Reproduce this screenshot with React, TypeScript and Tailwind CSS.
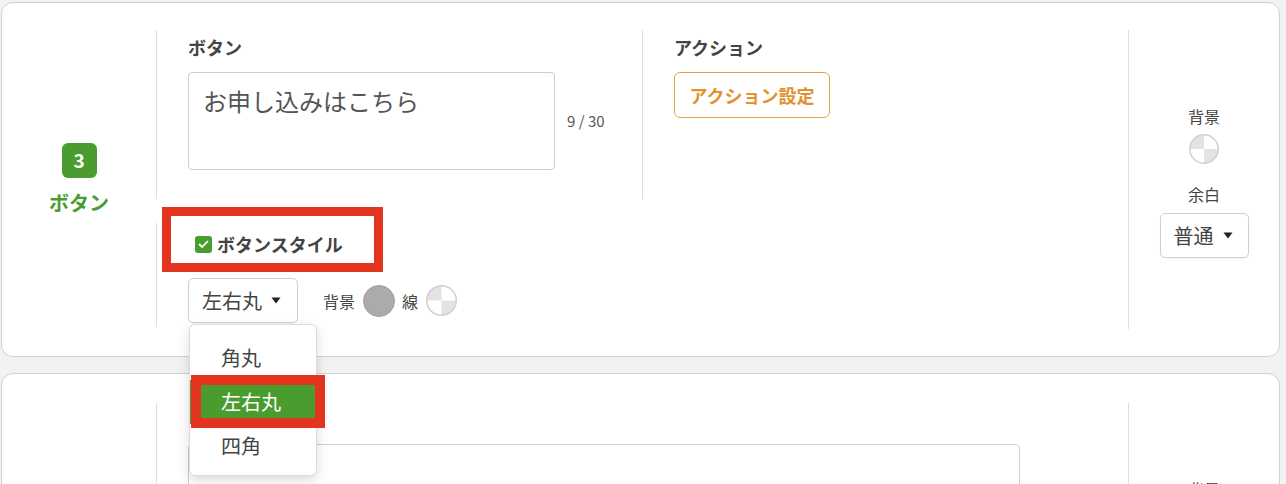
import React from "react";

const FONT = "font-['Noto_Sans_CJK_JP','Noto_Sans',sans-serif]";

function Caret() {
  return (
    <svg width="10" height="7" viewBox="0 0 10 7" className="ml-[9px]">
      <path d="M0.5 0.5 L9.5 0.5 L5 6.5 Z" fill="#222" />
    </svg>
  );
}

function CheckerSwatch({ size = 30 }: { size?: number }) {
  const r = size / 2 - 0.75;
  const c = size / 2;
  return (
    <svg width={size} height={size} viewBox={`0 0 ${size} ${size}`}>
      <defs>
        <clipPath id={`clip-${size}`}>
          <circle cx={c} cy={c} r={r} />
        </clipPath>
      </defs>
      <g clipPath={`url(#clip-${size})`}>
        <rect x="0" y="0" width={size} height={size} fill="#fff" />
        <rect x="0" y="0" width={c} height={c} fill="#e3e3e3" />
        <rect x={c} y={c} width={c} height={c} fill="#e3e3e3" />
      </g>
      <circle cx={c} cy={c} r={r} fill="none" stroke="#cfcfcf" strokeWidth="1.5" />
    </svg>
  );
}

function SelectBox({ label, width }: { label: string; width: string }) {
  return (
    <div
      className={`flex h-[45px] ${width} items-center rounded-[5px] border border-[#cfcfcf] bg-white pl-[13px] text-[20px] text-[#444] shadow-[0_1px_1px_rgba(0,0,0,0.04)]`}
    >
      <span className="leading-none">{label}</span>
      <Caret />
    </div>
  );
}

function RightColumn() {
  return (
    <div className="flex w-[151px] flex-col items-center border-l border-[#dedede] pt-[74px]">
      <span className="text-[16px] leading-[24px] text-[#444]">背景</span>
      <div className="mt-[6px]">
        <CheckerSwatch />
      </div>
      <span className="mt-[18px] text-[16px] leading-[24px] text-[#444]">余白</span>
      <div className="mt-[7px]">
        <SelectBox label="普通" width="w-[89px]" />
      </div>
    </div>
  );
}

export default function App() {
  return (
    <div className={`min-h-screen overflow-hidden bg-[#f2f2f2] pl-px pr-[6px] pt-[2px] ${FONT}`}>
      {/* card 3: button */}
      <div className="flex h-[355px] rounded-[12px] border border-[#d0d0d0] bg-white py-[27px]">
        <div className="flex w-[154px] flex-col items-center justify-center">
          <div className="flex h-[35px] w-[35px] items-center justify-center rounded-[6px] bg-[#4b9c2e] text-[19px] font-bold text-white">
            3
          </div>
          <span className="mt-[12px] text-[20px] font-bold leading-[26px] text-[#4b9c2e]">ボタン</span>
        </div>

        <div className="flex flex-1 flex-col gap-[24px]">
          <div className="flex h-[169px]">
            <div className="w-[486px] border-l border-[#dedede] pl-[31px]">
              <div className="mt-[4px] text-[18px] font-bold leading-[26px] text-[#444]">ボタン</div>
              <div className="mt-[12px] flex items-center">
                <textarea
                  readOnly
                  value="お申し込みはこちら"
                  className="h-[98px] w-[367px] resize-none rounded-[4px] border border-[#cfcfcf] px-[14px] pt-[10px] text-[24px] leading-[36px] text-[#555] outline-none"
                />
                <span className="ml-[12px] text-[15px] text-[#555]">9 / 30</span>
              </div>
            </div>
            <div className="flex-1 border-l border-[#dedede] pl-[31px]">
              <div className="mt-[4px] text-[18px] font-bold leading-[26px] text-[#444]">アクション</div>
              <button className="mt-[12px] flex h-[46px] w-[156px] items-center justify-center rounded-[6px] border border-[#e9a04c] bg-white text-[18px] font-bold text-[#e3912f]">
                アクション設定
              </button>
            </div>
          </div>

          <div className="relative h-[104px] border-l border-[#dedede] pl-[31px]">
            <div className="mt-[11px] flex h-[20px] items-center gap-[5px] pl-[7px]">
              <span className="flex h-[17px] w-[17px] items-center justify-center rounded-[3px] bg-[#4b9c2e]">
                <svg width="11" height="9" viewBox="0 0 11 9">
                  <path d="M1.5 4.5 L4.2 7 L9.5 1.5" fill="none" stroke="#fff" strokeWidth="1.8" strokeLinecap="round" strokeLinejoin="round" />
                </svg>
              </span>
              <span className="text-[18px] font-bold leading-[20px] text-[#444]">ボタンスタイル</span>
            </div>
            <div className="mt-[24px] flex items-center">
              <SelectBox label="左右丸" width="w-[110px]" />
              <span className="ml-[25px] text-[16px] text-[#444]">背景</span>
              <span className="ml-[8px] h-[32px] w-[32px] rounded-full border border-[#a0a0a0] bg-[#ababab]" />
              <span className="ml-[7px] text-[16px] text-[#444]">線</span>
              <span className="ml-[8px] flex">
                <CheckerSwatch size={31} />
              </span>
            </div>

            {/* annotation around the checkbox */}
            <div className="pointer-events-none absolute left-[5px] top-[-16px] z-20 h-[65px] w-[221px] border-[9px] border-[#e3341f]" />

            {/* open dropdown */}
            <div className="absolute left-[32px] top-[101px] z-10 w-[128px] rounded-[6px] border border-[#dcdcdc] bg-white pb-[7px] pt-[11px] text-[20px] shadow-[0_4px_12px_rgba(0,0,0,0.15)]">
              <div className="flex h-[44px] items-center pl-[31px] text-[#444]">角丸</div>
              <div className="flex h-[44px] items-center bg-[#4b9c2e] pl-[31px] text-white">左右丸</div>
              <div className="flex h-[44px] items-center pl-[31px] text-[#444]">四角</div>
            </div>
            <div className="pointer-events-none absolute left-[34px] top-[152px] z-20 h-[53px] w-[134px] border-[10px] border-[#e3341f]" />
          </div>
        </div>

        <RightColumn />
      </div>

      {/* next card */}
      <div className="mt-[16px] flex h-[320px] rounded-[12px] border border-[#d0d0d0] bg-white py-[29px]">
        <div className="w-[154px]" />
        <div className="flex-1 border-l border-[#dedede] pl-[31px]">
          <textarea
            readOnly
            value=""
            className="mt-[41px] h-[140px] w-[832px] resize-none rounded-[4px] border border-[#cfcfcf] text-[24px] outline-none"
          />
        </div>
        <RightColumn />
      </div>
    </div>
  );
}
